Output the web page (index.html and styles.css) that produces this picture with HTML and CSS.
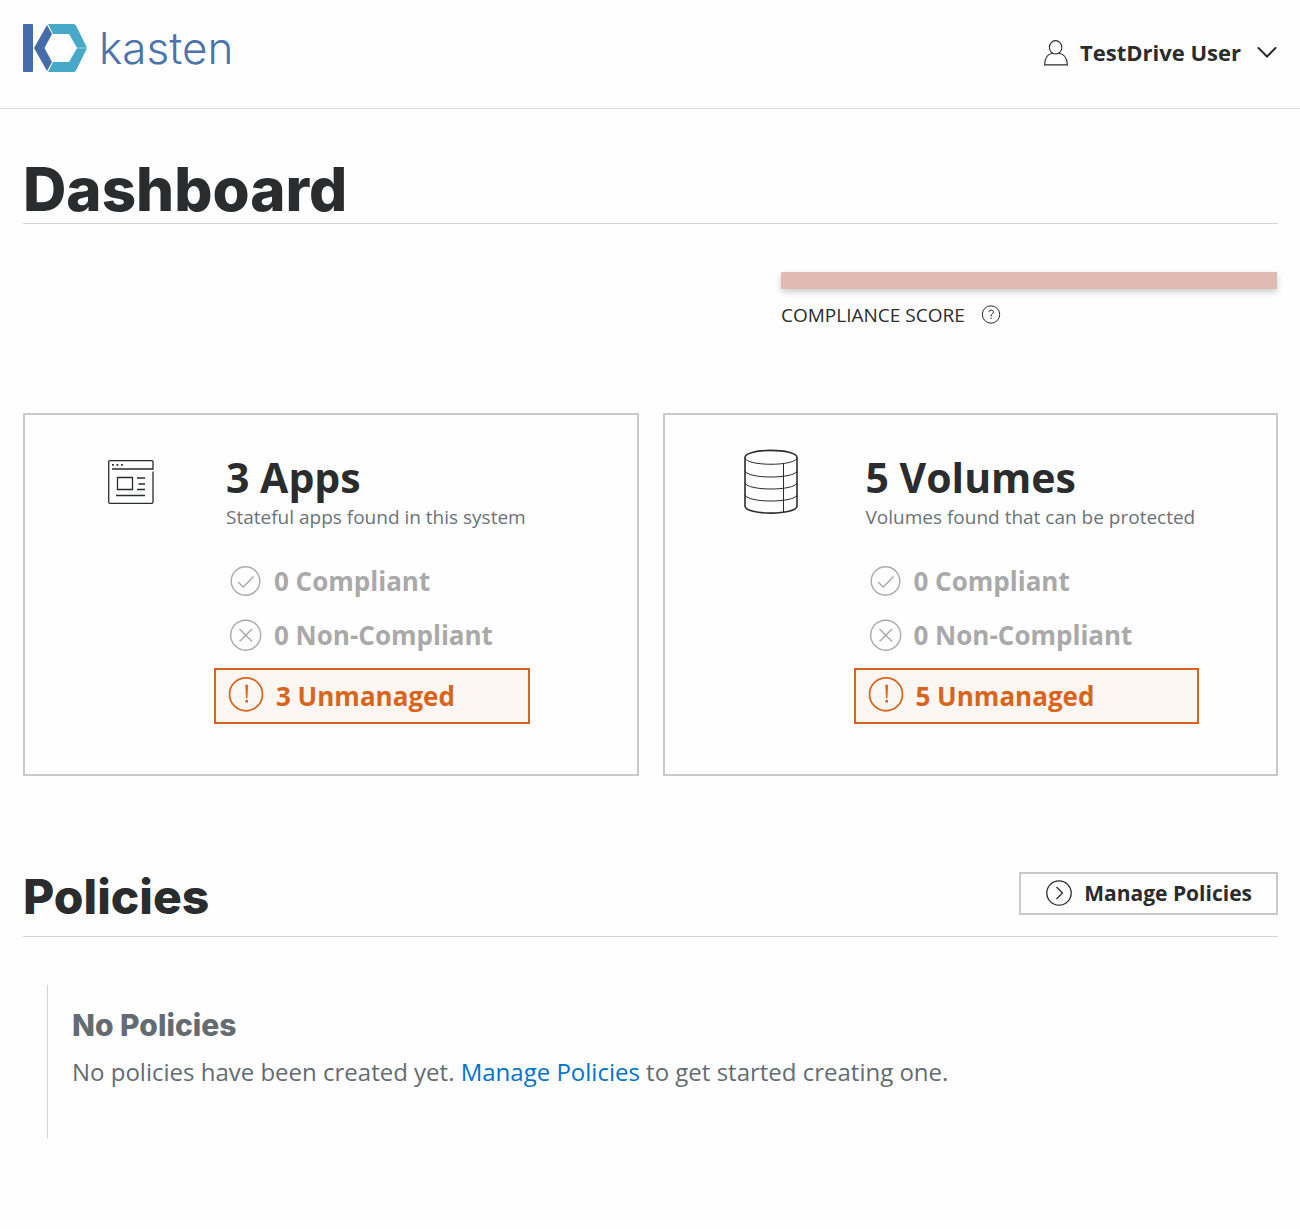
FILE: index.html
```html
<!DOCTYPE html>
<html lang="en">
<head>
<meta charset="utf-8">
<meta name="viewport" content="width=device-width, initial-scale=1">
<title>Kasten Dashboard</title>
<link rel="stylesheet" href="styles.css">
</head>
<body>
<svg class="sprite" aria-hidden="true">
  <symbol id="check" viewBox="0 0 32 32"><circle cx="15.500" cy="16" r="14.300"/><path d="M8 17l5.300 5L23.500 11.500"/></symbol>
  <symbol id="cross" viewBox="0 0 32 32"><circle cx="15.700" cy="16.200" r="15"/><path d="M9.500 9.900l12.600 12.600M22.100 9.900L9.500 22.500"/></symbol>
  <symbol id="alert" viewBox="0 0 36 36"><circle cx="18" cy="18.300" r="16.500"/><path class="solid" d="M17.300 8.800h2.800l-.7 13.500h-1.400zM17.400 24h2.600v2.400h-2.600z"/></symbol>
</svg>
<header class="topbar">
  <a class="brand" href="#">
    <svg class="brand-mark" width="64" height="48" viewBox="0 0 64 48" aria-hidden="true">
      <rect width="10" height="48" rx="1" fill="#446dac"/>
      <path d="M24 1l5 9-7.500 14L29 38l-5 9L11 24z" fill="#446dac"/>
      <path d="M25 0h25.500q1.500 0 2.500 1.500L64 23.700H54L46 10H30zM30 38h16l8-13.700h10L53 46.500Q52 48 50.500 48H25z" fill="#47a8c8"/>
    </svg>
    <span class="brand-name">kasten</span>
  </a>
  <button class="user" type="button">
    <svg width="24" height="28" viewBox="0 0 24 28" fill="none" stroke="#2a2c2d" stroke-width="1.100" aria-hidden="true"><ellipse cx="11.600" cy="9.300" rx="6.200" ry="6.700"/><path d="M8.500 15.300C3.500 16 .8 20.500.6 26.900h22.800C23.200 20.500 20 16 14.700 15.300"/></svg>
    <span class="user-name">TestDrive User</span>
    <svg width="20" height="12" viewBox="0 0 20 12" fill="none" stroke="#2a2c2d" stroke-width="2" stroke-linecap="round" aria-hidden="true"><path d="M1.500 2l8.500 8.500L18.500 2"/></svg>
  </button>
</header>
<main class="page">
  <h1 class="page-title">Dashboard</h1>
  <section class="score">
    <div class="score-bar"></div>
    <div class="score-label">
      <span>COMPLIANCE SCORE</span>
      <button class="help" type="button" aria-label="About compliance score"><svg width="20" height="20" viewBox="0 0 20 20" fill="none" stroke="#2a2c2d" stroke-width="1" aria-hidden="true"><circle cx="10" cy="9.500" r="8.700"/><path d="M7.900 7.100c.1-2.700 4.500-2.700 4.500-.1 0 1.900-2.300 1.900-2.300 4v.5M10.100 12.700v1.300"/></svg></button>
    </div>
  </section>
  <section class="cards">
    <article class="card">
      <div class="card-icon">
        <svg width="46" height="44" viewBox="0 0 46 44" fill="none" stroke="#2a2c2d" stroke-width="1.300" aria-hidden="true"><path d="M4 9h41V2q0-1.300-1.300-1.300H2Q.7.700.7 2v40Q.7 43.300 2 43.300h41.700q1.300 0 1.300-1.300V11.500"/><path d="M4 4.900h1.800M8.500 4.900h1.800M13 4.900h1.800" stroke-width="1.800"/><path d="M9.500 17.500h15v12h-15zM29 18h8M30.500 24H37M29 29.500h8M8 35.500h29"/></svg>
      </div>
      <div class="card-main">
        <h2 class="card-title">3 Apps</h2>
        <p class="card-note">Stateful apps found in this system</p>
        <ul class="stats">
          <li class="stat"><svg class="stat-icon"><use href="#check"/></svg>0 Compliant</li>
          <li class="stat"><svg class="stat-icon"><use href="#cross"/></svg>0 Non-Compliant</li>
          <li class="stat stat-alert"><svg class="stat-icon"><use href="#alert"/></svg>3 Unmanaged</li>
        </ul>
      </div>
    </article>
    <article class="card">
      <div class="card-icon">
        <svg width="54" height="66" viewBox="0 0 54 66" fill="none" stroke="#2a2c2d" stroke-width="1" aria-hidden="true"><path stroke-width="1.600" d="M1 8.500C1 -1 53 -1 53 8.500V57C53 66.500 1 66.500 1 57z"/><path d="M1 8.500c0 9 52 9 52 0M1 22c3 8 49 8 52 0M1 34c3 8 49 8 52 0M1 46c3 8 49 8 52 0M39.500 14.500V63"/></svg>
      </div>
      <div class="card-main">
        <h2 class="card-title">5 Volumes</h2>
        <p class="card-note">Volumes found that can be protected</p>
        <ul class="stats">
          <li class="stat"><svg class="stat-icon"><use href="#check"/></svg>0 Compliant</li>
          <li class="stat"><svg class="stat-icon"><use href="#cross"/></svg>0 Non-Compliant</li>
          <li class="stat stat-alert"><svg class="stat-icon"><use href="#alert"/></svg>5 Unmanaged</li>
        </ul>
      </div>
    </article>
  </section>
  <section class="policies">
    <div class="section-head">
      <h2 class="section-title">Policies</h2>
      <button class="manage" type="button">
        <svg width="26" height="26" viewBox="0 0 26 26" fill="none" stroke="#2a2c2d" stroke-width="1.300" aria-hidden="true"><circle cx="13" cy="13" r="12.200"/><path d="M10.500 7l6 6-6 6"/></svg>
        Manage Policies
      </button>
    </div>
    <div class="empty">
      <h3 class="empty-title">No Policies</h3>
      <p class="empty-text">No policies have been created yet. <a href="#">Manage Policies</a> to get started creating one.</p>
    </div>
  </section>
</main>
</body>
</html>
```
FILE: styles.css
```css
* { box-sizing: border-box; }

body {
  margin: 0;
  background: #fefefe;
  color: #2a2c2d;
  font-family: "Open Sans", "Noto Sans", sans-serif;
}

h1, h2, h3, p, ul { margin: 0; padding: 0; }
ul { list-style: none; }
svg { flex: none; display: block; }
button { font: inherit; color: inherit; background: none; border: 0; padding: 0; cursor: pointer; }

.sprite { display: none; }

.topbar {
  display: flex;
  justify-content: space-between;
  align-items: flex-start;
  padding: 24px 23px 36px;
  border-bottom: 1px solid #e4e4e4;
}

.brand {
  display: flex;
  align-items: center;
  gap: 12px;
  color: #4b74ad;
  text-decoration: none;
}

.brand-name {
  font-family: Inter, sans-serif;
  font-size: 44px;
  font-weight: 300;
  line-height: 48px;
}

.user {
  display: flex;
  align-items: center;
  gap: 12px;
  padding-top: 14px;
  font-size: 22px;
  font-weight: 700;
  line-height: 28px;
}

.user-name { margin-right: 4px; }

.page { padding: 48px 22px 91px 23px; }

.page-title,
.section-title,
.empty-title {
  font-family: Inter, sans-serif;
  font-weight: 800;
}

.page-title {
  padding-bottom: 2px;
  border-bottom: 1px solid #d4d4d4;
  font-size: 60px;
  line-height: 64px;
}

.score {
  width: 496px;
  max-width: 100%;
  margin: 48px 1px 86px auto;
}

.score-bar {
  height: 17px;
  background: #e1bab5;
  box-shadow: 0 3px 6px rgba(0, 0, 0, 0.2);
}

.score-label {
  display: flex;
  align-items: center;
  gap: 16px;
  margin-top: 14px;
  font-size: 19px;
  line-height: 24px;
}

.cards {
  display: grid;
  grid-template-columns: 1fr 1fr;
  gap: 24px;
}

.card {
  display: flex;
  padding: 34px 24px 50px 23px;
  border: 2px solid #cacaca;
}

.card-icon {
  display: flex;
  align-items: center;
  justify-content: center;
  width: 166px;
  height: 66px;
}

.card-title {
  padding-left: 12px;
  font-size: 41px;
  font-weight: 700;
  line-height: 56px;
}

.card-note {
  padding: 0 4px 0 12px;
  color: #6a737a;
  font-size: 19px;
  line-height: 24px;
}

.stats { margin-top: 25px; }

.stat {
  display: flex;
  align-items: center;
  gap: 12px;
  height: 54px;
  padding-left: 16px;
  color: #a9a9a9;
  font-size: 26px;
  font-weight: 700;
}

.stat-icon {
  width: 32px;
  height: 32px;
  fill: none;
  stroke: currentColor;
  stroke-width: 1.4px;
}

.solid { fill: currentColor; stroke: none; }

.stat-alert {
  height: 56px;
  margin-top: 6px;
  padding-left: 12px;
  border: 2px solid #d9641b;
  background: #fdf7f3;
  color: #d9641b;
}

.stat-alert .stat-icon {
  width: 36px;
  height: 36px;
  margin-bottom: 4px;
  stroke-width: 1.7px;
}

.policies { margin-top: 96px; }

.section-head {
  display: flex;
  justify-content: space-between;
  align-items: flex-start;
  padding-bottom: 14px;
  border-bottom: 1px solid #d4d4d4;
}

.section-title {
  font-size: 48px;
  line-height: 50px;
}

.manage {
  display: flex;
  align-items: center;
  gap: 12px;
  height: 43px;
  padding: 0 24px 2px 25px;
  border: 2px solid #cacaca;
  font-size: 21px;
  font-weight: 700;
  line-height: 24px;
}

.empty {
  margin: 48px 0 0 24px;
  padding: 22px 24px 48px;
  border-left: 1px solid #d4d4d4;
  color: #646c73;
}

.empty-title {
  font-size: 30px;
  line-height: 36px;
}

.empty-text {
  margin-top: 11px;
  font-size: 24px;
  line-height: 36px;
}

.empty-text a { color: #0073cf; text-decoration: none; }
```
